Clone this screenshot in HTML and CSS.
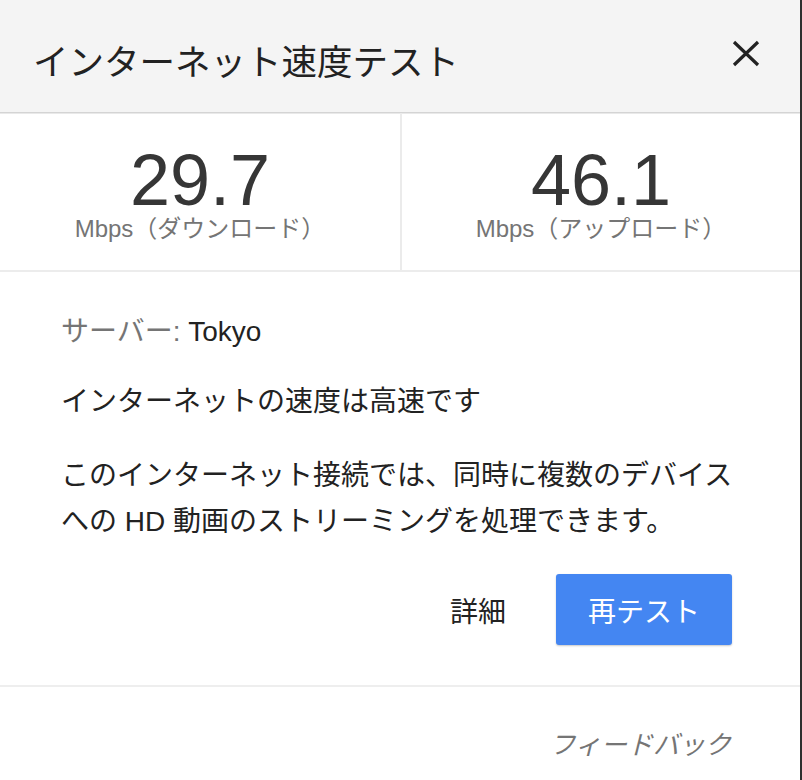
FILE: index.html
```html
<!DOCTYPE html>
<html lang="ja">
<head>
    <meta charset="UTF-8">
    <meta name="viewport" content="width=device-width, initial-scale=1.0">
    <title>インターネット速度テスト</title>
    <link rel="stylesheet" href="styles.css">
</head>
<body>
    <div class="panel">
        <header class="bar">
            <h1 class="title">インターネット速度テスト</h1>
            <button class="close" aria-label="閉じる">
                <svg width="28" height="28" viewBox="0 0 28 28">
                    <path d="M2 3 L26 26 M26 3 L2 26" stroke="#222" stroke-width="3.2" fill="none"/>
                </svg>
            </button>
        </header>
        <section class="stats">
            <div class="stat">
                <div class="value">29.7</div>
                <div class="unit">Mbps（ダウンロード）</div>
            </div>
            <div class="stat">
                <div class="value">46.1</div>
                <div class="unit">Mbps（アップロード）</div>
            </div>
        </section>
        <section class="details">
            <p class="server"><span class="label">サーバー:</span> Tokyo</p>
            <p class="speed">インターネットの速度は高速です</p>
            <p class="desc">このインターネット接続では、同時に複数のデバイスへの HD 動画のストリーミングを処理できます。</p>
            <div class="actions">
                <button class="link-btn">詳細</button>
                <button class="button">再テスト</button>
            </div>
        </section>
        <footer class="foot">
            <a class="feedback" href="#">フィードバック</a>
        </footer>
    </div>
</body>
</html>
```

FILE: styles.css
```css
body {
    margin: 0;
    background-color: #ffffff;
    color: #222222;
    font-family: "Liberation Sans", "Noto Sans CJK JP", sans-serif;
}
.panel {
    width: 800px;
    height: 780px;
    border-right: 2px solid #2e2e2e;
    background-color: #ffffff;
}
.bar {
    display: flex;
    align-items: center;
    justify-content: space-between;
    box-sizing: border-box;
    height: 113px;
    padding: 14px 40px 0 33px;
    background-color: #f4f4f4;
    border-bottom: 1px solid #d4d4d4;
    box-shadow: 0 1px 0 #e9e9e9;
}
.title {
    margin: 0;
    font-size: 35.5px;
    font-weight: normal;
    line-height: 40px;
    color: #222222;
}
.close {
    display: flex;
    padding: 0;
    margin-top: -21px;
    border: none;
    background: none;
    cursor: pointer;
}
.stats {
    display: grid;
    grid-template-columns: 402px 1fr;
    height: 157px;
    border-bottom: 2px solid #ececec;
}
.stat {
    padding-top: 34px;
    text-align: center;
}
.stat:first-child {
    border-right: 2px solid #ebebeb;
}
.value {
    font-size: 72px;
    line-height: 66px;
    color: #363636;
}
.unit {
    margin-top: 2px;
    font-size: 24px;
    line-height: 28px;
    color: #757575;
}
.details {
    padding: 37px 61px 40px;
}
.details p {
    margin: 0;
    font-size: 28px;
    line-height: 46px;
}
.server {
    margin-bottom: 24px !important;
}
.speed {
    margin-bottom: 28px !important;
}
.label {
    color: #757575;
}
.actions {
    display: flex;
    justify-content: flex-end;
    align-items: center;
    margin-top: 29px;
    padding-right: 7px;
}
.link-btn {
    margin-right: 50px;
    padding: 0;
    border: none;
    background: none;
    font-family: inherit;
    font-size: 28px;
    color: #222222;
    cursor: pointer;
}
.button {
    width: 176px;
    height: 71px;
    border: none;
    border-radius: 3px;
    background-color: #4486f2;
    box-shadow: 0 1px 2px rgba(0, 0, 0, 0.22);
    color: #ffffff;
    font-family: inherit;
    font-size: 28px;
    cursor: pointer;
}
.foot {
    display: flex;
    justify-content: flex-end;
    padding: 43px 69px 0 0;
    border-top: 2px solid #eeeeee;
}
.feedback {
    font-size: 26px;
    line-height: 30px;
    font-style: italic;
    color: #757575;
    text-decoration: none;
}
```
